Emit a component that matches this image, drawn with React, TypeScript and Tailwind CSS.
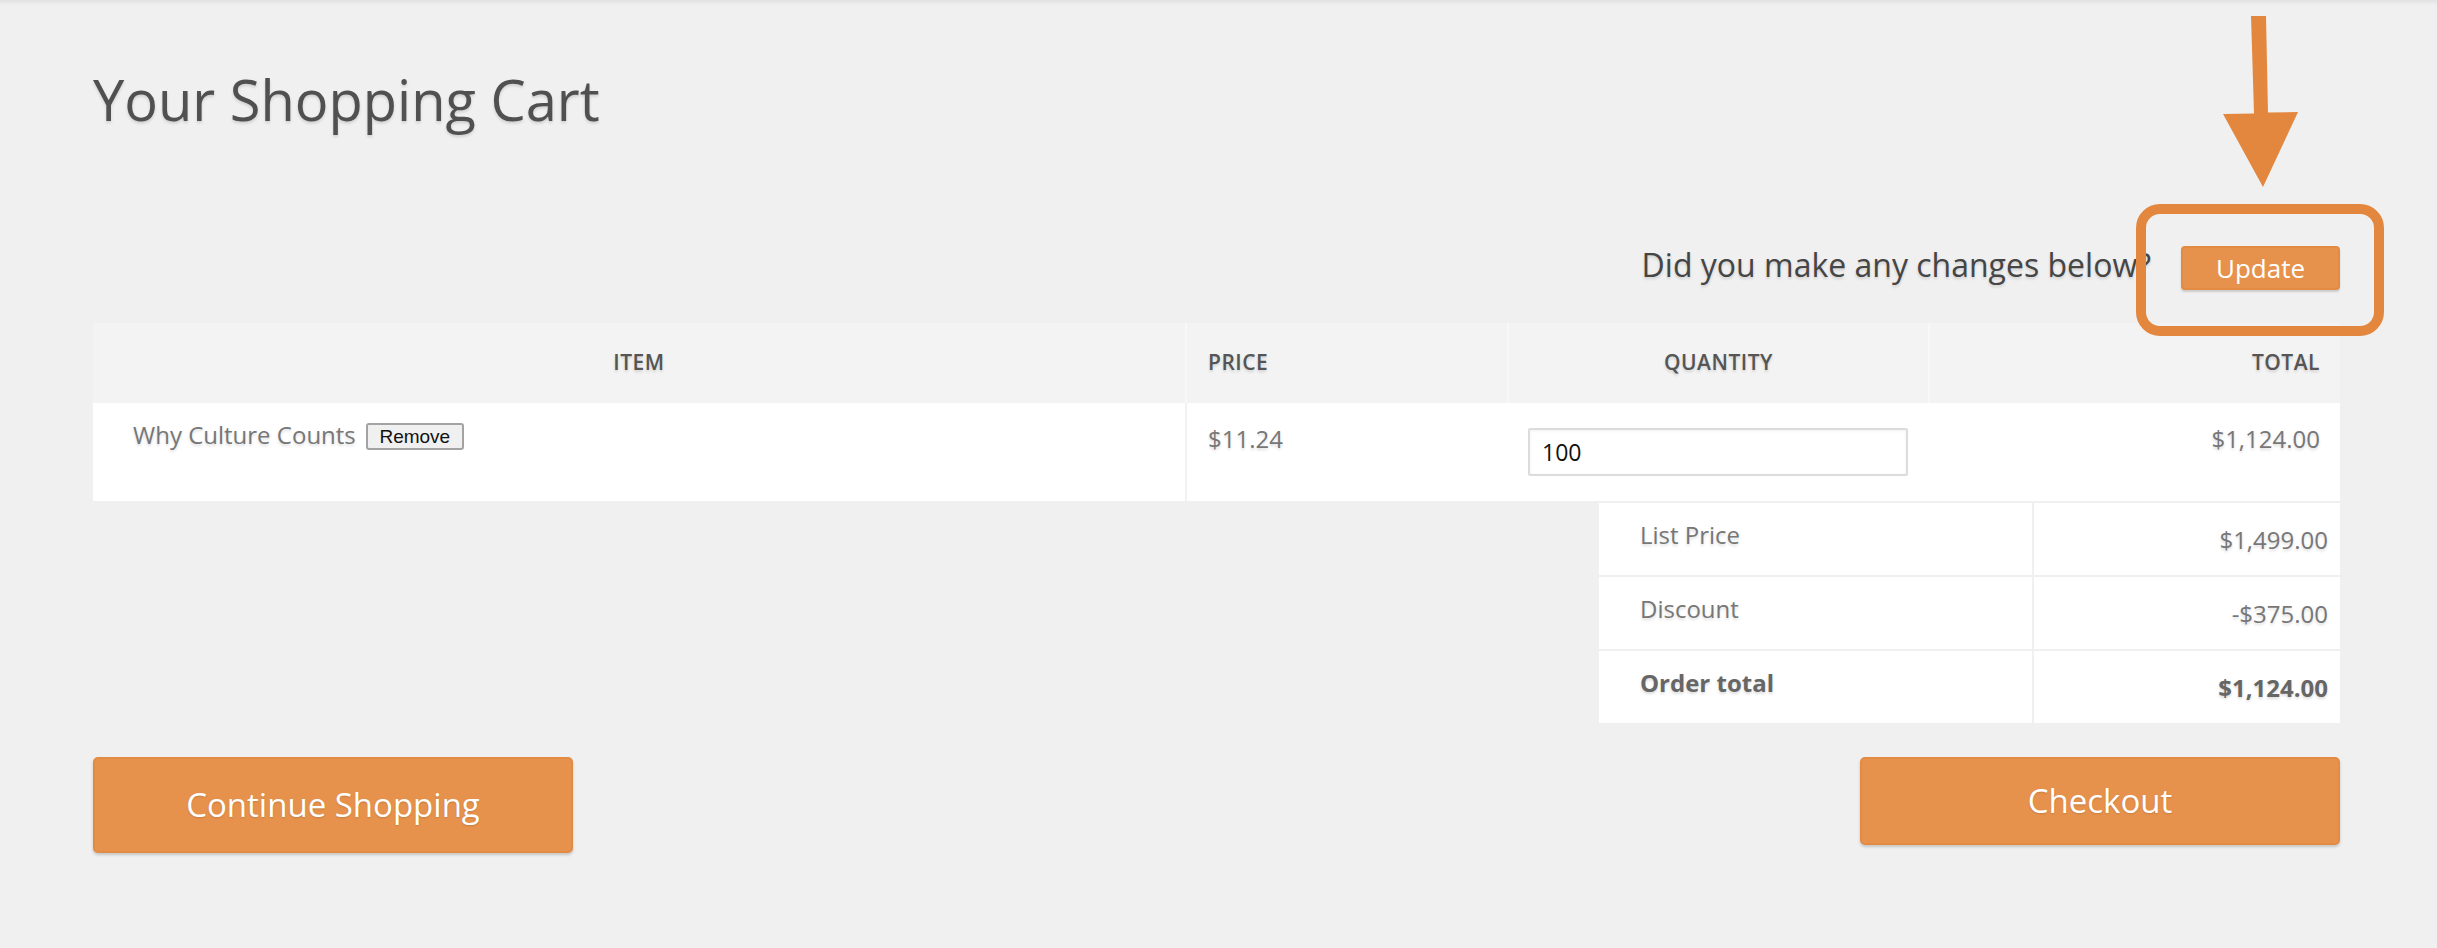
import React, { useState } from 'react';

// Linhas do resumo do pedido
const SUMMARY = [
  { label: 'List Price', value: '$1,499.00', bold: false },
  { label: 'Discount', value: '-$375.00', bold: false },
  { label: 'Order total', value: '$1,124.00', bold: true },
];

const shadowText = '[text-shadow:0_2px_3px_rgba(0,0,0,0.14)]';

const UpdateCallout: React.FC = () => (
  <div className="relative">
    {/* seta da anotação */}
    <svg
      className="absolute left-[42px] top-[-230px] w-[75px] h-[171px]"
      viewBox="0 0 75 171"
    >
      <polygon points="28,0 43,0 45,96.5 75,96 40,171 0,98 31,97.5" fill="#e3873f" />
    </svg>
    {/* moldura da anotação */}
    <div className="absolute left-[-45px] top-[-42px] w-[248px] h-[132px] border-[10px] border-[#e3873f] rounded-[24px] pointer-events-none" />
    <button className="h-[44px] w-[159px] bg-[#e7924c] border-2 border-[#e38a43] rounded-[4px] shadow-[0_2px_2px_rgba(0,0,0,0.15)] text-white text-[26px] leading-[40px]">
      Update
    </button>
  </div>
);

export default function App() {
  const [qty, setQty] = useState('100');

  return (
    <div className="min-h-screen bg-[#f0f0f0] shadow-[inset_0_6px_5px_-4px_rgba(0,0,0,0.07)] font-['Open_Sans',sans-serif]">
      <div className="ml-[93px] w-[2247px] flex flex-col">
        <h1 className={`pt-[71px] text-[56px] leading-[56px] text-[#505050] ${shadowText}`}>
          Your Shopping Cart
        </h1>

        <div className="mt-[119px] flex items-start justify-end gap-[30px]">
          <span className={`text-[32px] leading-[38px] text-[#454545] ${shadowText}`}>
            Did you make any changes below?
          </span>
          <UpdateCallout />
        </div>

        {/* tabela do carrinho */}
        <div className="mt-[33px] grid grid-cols-[1092px_322px_421px_412px]">
          <div className={`h-[80px] bg-[#f3f3f3] flex items-center justify-center text-[21px] font-semibold tracking-[0.5px] text-[#555] ${shadowText}`}>ITEM</div>
          <div className={`h-[80px] bg-[#f3f3f3] border-l-2 border-[#f8f8f8] flex items-center pl-[21px] text-[21px] font-semibold tracking-[0.5px] text-[#555] ${shadowText}`}>PRICE</div>
          <div className={`h-[80px] bg-[#f3f3f3] border-l-2 border-[#f8f8f8] flex items-center justify-center text-[21px] font-semibold tracking-[0.5px] text-[#555] ${shadowText}`}>QUANTITY</div>
          <div className={`h-[80px] bg-[#f3f3f3] border-l-2 border-[#f8f8f8] flex items-center justify-end pr-[20px] text-[21px] font-semibold tracking-[0.5px] text-[#555] ${shadowText}`}>TOTAL</div>

          <div className="h-[98px] bg-white pl-[40px] pt-[16px] flex items-start gap-[10px]">
            <span className={`text-[24px] leading-[32px] text-[#777] ${shadowText}`}>Why Culture Counts</span>
            <button className="mt-[4px] h-[27px] w-[98px] bg-[#f0f0f0] border-2 border-[#a3a3a3] rounded-[3px] text-[19px] leading-[21px] text-[#111] font-['Liberation_Sans',sans-serif]">
              Remove
            </button>
          </div>
          <div className={`h-[98px] bg-white border-l-2 border-[#f2f2f2] pl-[21px] pt-[20px] text-[24px] leading-[32px] text-[#777] ${shadowText}`}>
            $11.24
          </div>
          <div className="h-[98px] bg-white pl-[21px] pt-[25px]">
            <input
              value={qty}
              onChange={(e) => setQty(e.target.value)}
              className="h-[48px] w-[380px] border-2 border-[#dcdcdc] rounded-[2px] bg-white px-[12px] text-[23px] text-[#111] shadow-[inset_0_1px_3px_rgba(0,0,0,0.06)] outline-none"
            />
          </div>
          <div className={`h-[98px] bg-white pr-[20px] pt-[20px] text-right text-[24px] leading-[32px] text-[#777] ${shadowText}`}>
            $1,124.00
          </div>
        </div>

        {/* resumo */}
        <div className="mt-[2px] self-end w-[741px] grid grid-cols-[433px_306px] gap-[2px]">
          {SUMMARY.map((row) => (
            <React.Fragment key={row.label}>
              <div className={`h-[72px] bg-white pl-[41px] pt-[16px] text-[24px] leading-[32px] ${row.bold ? 'font-bold text-[#666]' : 'text-[#777]'} ${shadowText}`}>
                {row.label}
              </div>
              <div className={`h-[72px] bg-white pr-[12px] pt-[21px] text-right text-[24px] leading-[32px] ${row.bold ? 'font-bold text-[#666]' : 'text-[#777]'} ${shadowText}`}>
                {row.value}
              </div>
            </React.Fragment>
          ))}
        </div>

        <div className="mt-[34px] flex items-start justify-between">
          <button className="h-[96px] w-[480px] bg-[#e7924c] border-2 border-[#e38a43] rounded-[5px] shadow-[0_2px_3px_rgba(0,0,0,0.18)] text-white text-[33px] [text-shadow:0_1px_2px_rgba(0,0,0,0.15)]">
            Continue Shopping
          </button>
          <button className="h-[88px] w-[480px] bg-[#e7924c] border-2 border-[#e38a43] rounded-[5px] shadow-[0_2px_3px_rgba(0,0,0,0.18)] text-white text-[33px] [text-shadow:0_1px_2px_rgba(0,0,0,0.15)]">
            Checkout
          </button>
        </div>
      </div>
    </div>
  );
}
